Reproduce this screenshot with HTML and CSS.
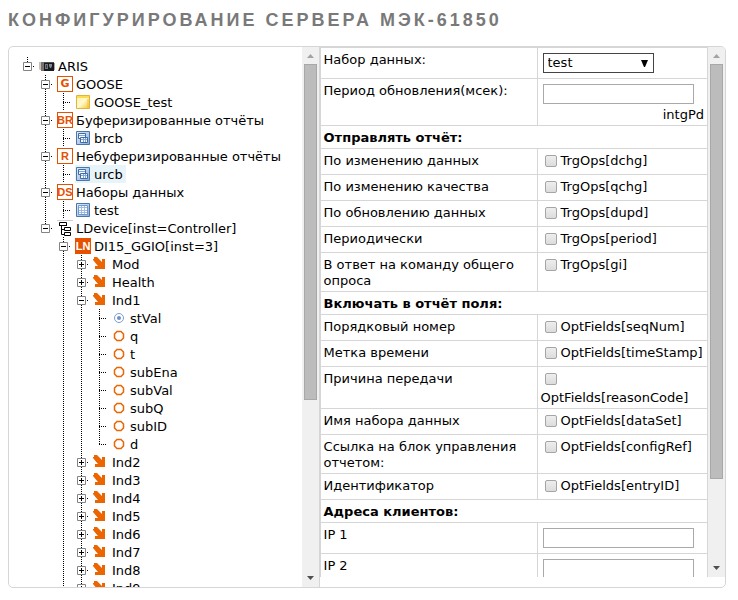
FILE: index.html
```html
<!DOCTYPE html>
<html lang="ru">
<head>
<meta charset="utf-8">
<title>Конфигурирование сервера МЭК-61850</title>
<link rel="stylesheet" href="styles.css">
</head>
<body>
<svg class="sprite" aria-hidden="true">
  <defs>
    <linearGradient id="gold" x1="0" y1="0" x2="1" y2="1"><stop offset="0" stop-color="#fff3b0"/><stop offset=".5" stop-color="#fff9cc"/><stop offset="1" stop-color="#f5c32c"/></linearGradient>
    <linearGradient id="blue" x1="0" y1="0" x2="1" y2="1"><stop offset="0" stop-color="#e4eefa"/><stop offset="1" stop-color="#88acd6"/></linearGradient>
  </defs>
  <symbol id="minus" viewBox="0 0 9 9"><path fill="#fff" stroke="#848484" d="M.5.5h8v8h-8z"/><path stroke="#000" d="M2 4.5h5"/></symbol>
  <symbol id="plus" viewBox="0 0 9 9"><path fill="#fff" stroke="#848484" d="M.5.5h8v8h-8z"/><path stroke="#000" d="M2 4.5h5M4.500 2v5"/></symbol>
  <symbol id="device" viewBox="0 0 16 16"><path fill="#c9bfb9" d="M0 4h3v8H1L0 11z"/><path fill="#79716e" d="M2 4h3v9H2z"/><path fill="#181a1e" d="M5 4h10v9H5z"/><path fill="#4b4e55" d="M5 4h10v1H5z"/><path fill="#707680" d="M6 6h3v5H6z"/><path fill="#343941" d="M7 7h1v3H7z"/><path fill="#858b94" d="M10 6h3v2l-1 2h-1l-1-2z"/><path fill="#aaa6a2" d="M15 5h1v7h-1z"/></symbol>
  <symbol id="note" viewBox="0 0 16 16"><path fill="url(#gold)" stroke="#e0b43c" d="M1.500 1.500h13v13h-13z"/><path fill="#ffdb52" d="M2 2h12v2H2z"/><path fill="#f5c32c" d="M12 5h2v9h-2z" opacity=".5"/></symbol>
  <symbol id="report" viewBox="0 0 16 16"><path fill="url(#blue)" stroke="#4d76a8" d="M1.500 1.500h13v13h-13z"/><path fill="#f5faff" stroke="#3f6ba7" d="M3.500 3.500h7v5h-7z"/><path stroke="#7fa5d7" d="M4 5.500h6"/><path fill="#f5faff" stroke="#3f6ba7" d="M5.500 7.500h7v5h-7z"/><path stroke="#7fa5d7" d="M6 9.500h6M8.500 8v4M10.500 8v4"/></symbol>
  <symbol id="dataset" viewBox="0 0 16 16"><path fill="url(#blue)" stroke="#4d76a8" d="M1.500 1.500h13v13h-13z"/><path fill="#fff" stroke="#6f99cc" d="M3.500 3.500h9v9h-9z"/><path stroke="#9bbce4" d="M4 5.500h8M4 8.500h8M4 10.500h8M6.500 4v8M9.500 4v8"/></symbol>
  <symbol id="hier" viewBox="0 0 16 16"><path fill="#d0d0d0" d="M0 0h16v1H0z"/><path fill="none" stroke="#000" d="M2.500 2.500h7v3h-7zM7.500 7.500h6v3h-6zM7.500 12.500h6v3h-6zM4.500 6v8.500H7M4.500 9.500H7M2 5.500h8"/></symbol>
  <symbol id="arrow" viewBox="0 0 16 16"><path fill="#eb6500" d="M1 1h3l5 5V3h3v10H2v-3h3L0 4V3h1z"/></symbol>
  <symbol id="ring" viewBox="0 0 16 16"><path fill="none" stroke="#eb6500" stroke-width="1.500" d="M6 3.500h4L12.500 6v4L10 12.500H6L3.500 10V6z"/></symbol>
  <symbol id="value" viewBox="0 0 16 16"><circle cx="8" cy="8" r="4.500" fill="#fff" stroke="#7c9dcb"/><circle cx="8" cy="8" r="2" fill="#6d91c4"/></symbol>
  <symbol id="up" viewBox="0 0 17 17"><path d="M5 11h7L8.500 7z"/></symbol>
  <symbol id="down" viewBox="0 0 17 17"><path d="M5 6h7l-3.500 4z"/></symbol>
</svg>

<h1 class="title">Конфигурирование сервера МЭК-61850</h1>

<main class="panel">
  <section class="tree-pane">
    <ul class="tree">
      <li class="node root"><div class="row"><svg class="twig"><use href="#minus"/></svg><svg class="icon"><use href="#device"/></svg><span class="name">ARIS</span></div>
        <ul>
          <li class="node"><div class="row"><svg class="twig"><use href="#minus"/></svg><span class="badge">G</span><span class="name">GOOSE</span></div>
            <ul><li class="node open leaf"><div class="row"><svg class="icon"><use href="#note"/></svg><span class="name">GOOSE_test</span></div></li></ul></li>
          <li class="node"><div class="row"><svg class="twig"><use href="#minus"/></svg><span class="badge narrow">BR</span><span class="name">Буферизированные отчёты</span></div>
            <ul><li class="node open leaf"><div class="row"><svg class="icon"><use href="#report"/></svg><span class="name">brcb</span></div></li></ul></li>
          <li class="node"><div class="row"><svg class="twig"><use href="#minus"/></svg><span class="badge narrow">R</span><span class="name">Небуферизированные отчёты</span></div>
            <ul><li class="node open leaf"><div class="row"><span class="selected"><svg class="icon"><use href="#report"/></svg><span class="name">urcb</span></span></div></li></ul></li>
          <li class="node"><div class="row"><svg class="twig"><use href="#minus"/></svg><span class="badge narrow">DS</span><span class="name">Наборы данных</span></div>
            <ul><li class="node open leaf"><div class="row"><svg class="icon"><use href="#dataset"/></svg><span class="name">test</span></div></li></ul></li>
          <li class="node"><div class="row"><svg class="twig"><use href="#minus"/></svg><svg class="icon"><use href="#hier"/></svg><span class="name">LDevice[inst=Controller]</span></div>
            <ul>
              <li class="node open"><div class="row"><svg class="twig"><use href="#minus"/></svg><span class="badge narrow solid">LN</span><span class="name">DI15_GGIO[inst=3]</span></div>
                <ul>
                  <li class="node"><div class="row"><svg class="twig"><use href="#plus"/></svg><svg class="icon"><use href="#arrow"/></svg><span class="name">Mod</span></div></li>
                  <li class="node"><div class="row"><svg class="twig"><use href="#plus"/></svg><svg class="icon"><use href="#arrow"/></svg><span class="name">Health</span></div></li>
                  <li class="node"><div class="row"><svg class="twig"><use href="#minus"/></svg><svg class="icon"><use href="#arrow"/></svg><span class="name">Ind1</span></div>
                    <ul>
                      <li class="node leaf"><div class="row"><svg class="icon"><use href="#value"/></svg><span class="name">stVal</span></div></li>
                      <li class="node leaf"><div class="row"><svg class="icon"><use href="#ring"/></svg><span class="name">q</span></div></li>
                      <li class="node leaf"><div class="row"><svg class="icon"><use href="#ring"/></svg><span class="name">t</span></div></li>
                      <li class="node leaf"><div class="row"><svg class="icon"><use href="#ring"/></svg><span class="name">subEna</span></div></li>
                      <li class="node leaf"><div class="row"><svg class="icon"><use href="#ring"/></svg><span class="name">subVal</span></div></li>
                      <li class="node leaf"><div class="row"><svg class="icon"><use href="#ring"/></svg><span class="name">subQ</span></div></li>
                      <li class="node leaf"><div class="row"><svg class="icon"><use href="#ring"/></svg><span class="name">subID</span></div></li>
                      <li class="node leaf"><div class="row"><svg class="icon"><use href="#ring"/></svg><span class="name">d</span></div></li>
                    </ul></li>
                  <li class="node"><div class="row"><svg class="twig"><use href="#plus"/></svg><svg class="icon"><use href="#arrow"/></svg><span class="name">Ind2</span></div></li>
                  <li class="node"><div class="row"><svg class="twig"><use href="#plus"/></svg><svg class="icon"><use href="#arrow"/></svg><span class="name">Ind3</span></div></li>
                  <li class="node"><div class="row"><svg class="twig"><use href="#plus"/></svg><svg class="icon"><use href="#arrow"/></svg><span class="name">Ind4</span></div></li>
                  <li class="node"><div class="row"><svg class="twig"><use href="#plus"/></svg><svg class="icon"><use href="#arrow"/></svg><span class="name">Ind5</span></div></li>
                  <li class="node"><div class="row"><svg class="twig"><use href="#plus"/></svg><svg class="icon"><use href="#arrow"/></svg><span class="name">Ind6</span></div></li>
                  <li class="node"><div class="row"><svg class="twig"><use href="#plus"/></svg><svg class="icon"><use href="#arrow"/></svg><span class="name">Ind7</span></div></li>
                  <li class="node"><div class="row"><svg class="twig"><use href="#plus"/></svg><svg class="icon"><use href="#arrow"/></svg><span class="name">Ind8</span></div></li>
                  <li class="node open"><div class="row"><svg class="twig"><use href="#plus"/></svg><svg class="icon"><use href="#arrow"/></svg><span class="name">Ind9</span></div></li>
                </ul></li>
            </ul></li>
        </ul></li>
    </ul>
    <div class="scrollbar"><svg class="step dim"><use href="#up"/></svg><div class="track"><div class="thumb tree-thumb"></div></div><svg class="step"><use href="#down"/></svg></div>
  </section>

  <section class="form-pane">
    <div class="form-view">
      <table class="props">
        <colgroup><col class="col-name"><col></colgroup>
        <tbody>
          <tr><td><label for="ds">Набор данных:</label></td><td><span class="combo"><select id="ds"><option>test</option></select><svg viewBox="0 0 7 7" aria-hidden="true"><path d="M0 0h7L4 7H3z"/></svg></span></td></tr>
          <tr><td><label for="pd">Период обновления(мсек):</label></td><td><input class="text" type="text" id="pd"><div class="hint">intgPd</div></td></tr>
          <tr><th colspan="2">Отправлять отчёт:</th></tr>
          <tr><td>По изменению данных</td><td><label class="check"><input type="checkbox"><span>TrgOps[dchg]</span></label></td></tr>
          <tr><td>По изменению качества</td><td><label class="check"><input type="checkbox"><span>TrgOps[qchg]</span></label></td></tr>
          <tr><td>По обновлению данных</td><td><label class="check"><input type="checkbox"><span>TrgOps[dupd]</span></label></td></tr>
          <tr><td>Периодически</td><td><label class="check"><input type="checkbox"><span>TrgOps[period]</span></label></td></tr>
          <tr><td>В ответ на команду общего опроса</td><td><label class="check"><input type="checkbox"><span>TrgOps[gi]</span></label></td></tr>
          <tr><th colspan="2">Включать в отчёт поля:</th></tr>
          <tr><td>Порядковый номер</td><td><label class="check"><input type="checkbox"><span>OptFields[seqNum]</span></label></td></tr>
          <tr><td>Метка времени</td><td><label class="check"><input type="checkbox"><span>OptFields[timeStamp]</span></label></td></tr>
          <tr><td>Причина передачи</td><td><label class="check"><input type="checkbox"><span>OptFields[reasonCode]</span></label></td></tr>
          <tr><td>Имя набора данных</td><td><label class="check"><input type="checkbox"><span>OptFields[dataSet]</span></label></td></tr>
          <tr><td>Ссылка на блок управления отчетом:</td><td><label class="check"><input type="checkbox"><span>OptFields[configRef]</span></label></td></tr>
          <tr><td>Идентификатор</td><td><label class="check"><input type="checkbox"><span>OptFields[entryID]</span></label></td></tr>
          <tr><th colspan="2">Адреса клиентов:</th></tr>
          <tr><td><label for="ip1">IP 1</label></td><td><input class="text" type="text" id="ip1"></td></tr>
          <tr><td><label for="ip2">IP 2</label></td><td><input class="text" type="text" id="ip2"></td></tr>
        </tbody>
      </table>
      <div class="scrollbar"><svg class="step dim"><use href="#up"/></svg><div class="track"><div class="thumb form-thumb"></div></div><svg class="step"><use href="#down"/></svg></div>
    </div>
  </section>
</main>
</body>
</html>
```
FILE: styles.css
```css
* { box-sizing: border-box; }

body {
  margin: 0;
  height: 100vh;
  padding: 8px 12px 12px 8px;
  display: flex;
  flex-direction: column;
  overflow: hidden;
  background: #fff;
  color: #000;
  font: 13px/16px "DejaVu Sans", Verdana, sans-serif;
}

.sprite { position: absolute; width: 0; height: 0; }

.title {
  margin: 0 0 14px;
  color: #797979;
  font: bold 18px/24px "Liberation Sans", Arial, sans-serif;
  letter-spacing: 3px;
  text-transform: uppercase;
  white-space: nowrap;
}

.panel {
  flex: 1;
  min-height: 0;
  display: flex;
  border: 1px solid #d6d6d6;
  border-radius: 5px;
  overflow: hidden;
}

.tree-pane {
  flex: 310 1 0;
  min-width: 0;
  display: flex;
  border-right: 1px solid #d6d6d6;
}

/* Tree */
.tree {
  flex: 1;
  min-width: 0;
  padding: 10px 0 0 9px;
  overflow: hidden;
}
.tree, .tree ul { margin: 0; list-style: none; }
.tree ul { padding: 0 0 0 18px; }

.node {
  background: repeating-linear-gradient(#000 0 1px, transparent 1px 2px) 9px 0 / 1px 100% no-repeat;
}
.node:last-child { background-size: 1px 9px; }
.node.open { background-size: 1px 100%; }

.row {
  display: flex;
  align-items: center;
  gap: 3px;
  height: 18px;
  white-space: nowrap;
}
.name { padding-top: 2px; }
.twig {
  flex: none;
  width: 18px;
  height: 9px;
  padding: 0 4px 0 5px;
  background: repeating-linear-gradient(90deg, transparent 0 1px, #000 1px 2px) 14px 4px / 2px 1px no-repeat;
}
.leaf > .row {
  padding-left: 21px;
  background: repeating-linear-gradient(90deg, #000 0 1px, transparent 1px 2px) 9px 9px / 7px 1px no-repeat;
}
.icon { flex: none; width: 16px; height: 16px; }

.badge {
  flex: none;
  width: 16px;
  height: 16px;
  border: 1px solid #e65100;
  background: #fff;
  color: #e65100;
  font: bold 11px/14px "DejaVu Sans", sans-serif;
  text-align: center;
}
.badge.narrow {
  display: flex;
  justify-content: center;
  font-family: "Liberation Sans", sans-serif;
}
.badge.solid { background: #e65100; color: #fff; }

.selected {
  display: flex;
  align-items: center;
  gap: 3px;
  height: 18px;
  padding-right: 3px;
  background: #e7f4f9;
}

/* Scrollbars */
.scrollbar {
  flex: none;
  width: 17px;
  display: flex;
  flex-direction: column;
  background: #f0f0f0;
}
.step { flex: none; width: 17px; height: 17px; fill: #505050; }
.step.dim { fill: #a3a3a3; }
.track { flex: 1; min-height: 0; padding: 0 2px; }
.thumb { background: #bcbcbc; border: 1px solid #a8a8a8; }
.tree-thumb { height: 66.5%; }
.form-thumb { height: 83.6%; }

/* Form */
.form-pane {
  flex: 406 1 0;
  min-width: 0;
  display: flex;
  padding-bottom: 10px;
}
.form-view { flex: 1; min-width: 0; display: flex; align-items: stretch; overflow: hidden; }

.props {
  flex: 1;
  min-width: 0;
  align-self: flex-start;
  table-layout: fixed;
  border-spacing: 0;
  border: solid #d6d6d6;
  border-width: 1px 0 0 1px;
}
.col-name { width: 56%; }
.props td, .props th {
  padding: 4px 3px 2px;
  border: solid #d6d6d6;
  border-width: 0 1px 1px 0;
  text-align: left;
  vertical-align: top;
}

.combo {
  display: grid;
  grid-template-columns: 111px;
  align-items: center;
  margin: 1px 2px 3px;
}
.combo > * { grid-area: 1 / 1; }
.combo svg { justify-self: end; width: 7px; height: 7px; margin-right: 6px; pointer-events: none; }
.combo select {
  appearance: none;
  height: 20px;
  margin: 0;
  padding: 0 4px;
  border: 1px solid #444;
  border-radius: 0;
  background: #fff;
  color: #000;
  font: inherit;
}

.text {
  display: block;
  width: 151px;
  height: 20px;
  margin: 1px 2px 3px;
  padding: 1px;
  border: 1px solid #a9a9a9;
  font: inherit;
}
.hint { text-align: right; }

.check {
  display: flex;
  flex-wrap: wrap;
  align-items: flex-start;
}
.check input {
  appearance: none;
  width: 12px;
  height: 12px;
  margin: 2px 4px 5px;
  border: 1px solid #a5a5a5;
  border-radius: 2px;
  background: linear-gradient(#eee, #dcdcdc);
}
```
